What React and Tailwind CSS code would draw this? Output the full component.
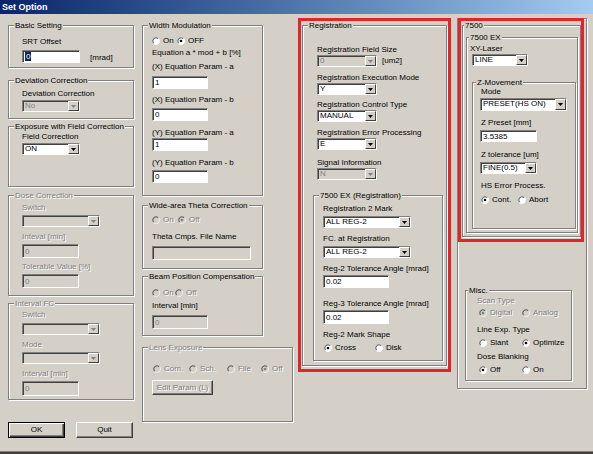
import React from 'react';

const dis = 'text-[#808080] [text-shadow:1px_1px_0_#fff]';
const sunken = 'border border-t-[#808080] border-l-[#808080] border-b-white border-r-white shadow-[inset_1px_1px_0_#404040]';

const Group = ({ title, disabled, legendClass = 'left-[5px]', className = '', children }) => (
    <div className={`relative border border-[#808080] shadow-[1px_1px_0_#fff,inset_1px_1px_0_#fff] ${className}`}>
        {title && (
            <span className={`absolute -top-[6px] bg-[#d4d0c8] px-[1px] leading-[11px] whitespace-nowrap ${legendClass} ${disabled ? dis : ''}`}>
                {title}
            </span>
        )}
        {children}
    </div>
);

const Label = ({ children, disabled, className = '' }) => (
    <div className={`h-[11px] leading-[11px] whitespace-nowrap ${disabled ? dis : ''} ${className}`}>{children}</div>
);

const Edit = ({ value, disabled, selected, className = '' }) => (
    <div className={`flex items-center pl-[2px] leading-[9px] ${sunken} ${disabled ? 'bg-[#d4d0c8] text-[#808080]' : 'bg-white'} ${className}`}>
        {selected ? <span className="bg-[#0a246a] text-white px-[1px]">{value}</span> : value}
    </div>
);

const Combo = ({ value, disabled, className = '' }) => (
    <div className={`flex h-[12px] ${sunken} ${disabled ? 'bg-[#d4d0c8]' : 'bg-white'} ${className}`}>
        <div className={`flex-1 pl-[2px] leading-[10px] whitespace-nowrap overflow-hidden ${disabled ? 'text-[#808080]' : ''}`}>{value}</div>
        <div className="w-[11px] flex items-center justify-center bg-[#d4d0c8] border border-t-white border-l-white border-b-[#404040] border-r-[#404040]">
            <svg width="5" height="3" viewBox="0 0 5 3">
                <path d="M0 0h5L2.5 3z" fill={disabled ? '#808080' : '#000'} />
            </svg>
        </div>
    </div>
);

const Radio = ({ label, checked, disabled, className = '' }) => (
    <span className={`inline-flex items-center gap-[3px] whitespace-nowrap ${className}`}>
        <svg width="8" height="8" viewBox="0 0 12 12" className="shrink-0">
            <circle cx="6" cy="6" r="5.5" fill={disabled ? '#d4d0c8' : '#fff'} />
            <path d="M2.1 9.9A5.5 5.5 0 0 1 9.9 2.1" stroke="#808080" fill="none" />
            <path d="M9.9 2.1A5.5 5.5 0 0 1 2.1 9.9" stroke="#fff" fill="none" />
            <path d="M2.8 9.2A4.5 4.5 0 0 1 9.2 2.8" stroke="#404040" fill="none" />
            {checked && <circle cx="6" cy="6" r="2" fill={disabled ? '#808080' : '#000'} />}
        </svg>
        <span className={disabled ? dis : ''}>{label}</span>
    </span>
);

const Btn = ({ children, isDefault, disabled, className = '' }) => (
    <div
        className={`flex items-center justify-center border ${
            isDefault
                ? 'border-black shadow-[inset_1px_1px_0_#fff,inset_-1px_-1px_0_#404040,inset_-2px_-2px_0_#808080]'
                : 'border-t-white border-l-white border-b-[#404040] border-r-[#404040] shadow-[inset_-1px_-1px_0_#808080]'
        } ${disabled ? dis : ''} ${className}`}
    >
        {children}
    </div>
);

const App = () => {
    return (
        <div className="relative w-[593px] h-[454px] overflow-hidden flex flex-col bg-[#d4d0c8] text-black text-[8px] font-['Liberation_Sans',Arial,sans-serif]">
            <div className="h-[14px] shrink-0 bg-gradient-to-r from-[#0a246a] to-[#a6caf0] text-white font-bold text-[9px] leading-[14px] pl-[2px]">
                Set Option
            </div>

            <div className="flex-1 flex items-start pl-[8px] pt-[11px]">
                {/* column 1 */}
                <div className="w-[126px] flex flex-col">
                    <Group title="Basic Setting" className="h-[43px] pl-[13px] pt-[10px]">
                        <Label>SRT Offset</Label>
                        <div className="mt-[2px] flex items-center">
                            <Edit value="0" selected className="w-[58px] h-[13px]" />
                            <span className="ml-[10px] mt-[3px]">[mrad]</span>
                        </div>
                    </Group>
                    <Group title="Deviation Correction" className="mt-[12px] h-[39px] pl-[13px] pt-[7px]">
                        <Label>Deviation Correction</Label>
                        <Combo value="No" disabled className="mt-[1px] w-[58px]" />
                    </Group>
                    <Group title="Exposure with Field Correction" className="mt-[7px] h-[61px] pl-[13px] pt-[4px]">
                        <Label>Field Correction</Label>
                        <Combo value="ON" className="mt-[1px] w-[58px]" />
                    </Group>
                    <Group title="Dose Correction" disabled className="mt-[8px] h-[101px] pl-[13px] pt-[6px]">
                        <Label disabled>Switch</Label>
                        <Combo value="" disabled className="mt-[2px] w-[78px]" />
                        <Label disabled className="mt-[4px]">Inteval [min]</Label>
                        <Edit value="0" disabled className="mt-[2px] w-[57px] h-[14px]" />
                        <Label disabled className="mt-[3px]">Tolerable Value [%]</Label>
                        <Edit value="0" disabled className="mt-[2px] w-[57px] h-[14px]" />
                    </Group>
                    <Group title="Interval FC" disabled className="mt-[7px] h-[97px] pl-[13px] pt-[5px]">
                        <Label disabled>Switch</Label>
                        <Combo value="" disabled className="mt-[3px] w-[78px]" />
                        <Label disabled className="mt-[4px]">Mode</Label>
                        <Combo value="" disabled className="mt-[2px] w-[78px]" />
                        <Label disabled className="mt-[4px]">Interval [min]</Label>
                        <Edit value="0" disabled className="mt-[2px] w-[57px] h-[15px]" />
                    </Group>
                    <div className="mt-[22px] flex">
                        <Btn isDefault className="w-[57px] h-[16px]">OK</Btn>
                        <Btn className="ml-[11px] w-[57px] h-[16px]">Quit</Btn>
                    </div>
                </div>

                {/* column 2 */}
                <div className="ml-[8px] w-[151px] flex flex-col">
                    <Group title="Width Modulation" className="w-[121px] h-[171px] pl-[9px] pt-[9px]">
                        <div className="flex h-[11px] items-center">
                            <Radio label="On" className="w-[25px]" />
                            <Radio label="OFF" checked />
                        </div>
                        <Label className="mt-[1px]">Equation a * mod + b [%]</Label>
                        <Label className="mt-[3px]">(X) Equation Param - a</Label>
                        <Edit value="1" className="mt-[4px] w-[56px] h-[13px]" />
                        <Label className="mt-[5px]">(X) Equation Param - b</Label>
                        <Edit value="0" className="mt-[3px] w-[56px] h-[13px]" />
                        <Label className="mt-[6px]">(Y) Equation Param - a</Label>
                        <Edit value="1" className="w-[56px] h-[13px]" />
                        <Label className="mt-[6px]">(Y) Equation Param - b</Label>
                        <Edit value="0" className="mt-[2px] w-[56px] h-[13px]" />
                    </Group>
                    <Group title="Wide-area Theta Correction" className="mt-[9px] w-[121px] h-[64px] pl-[9px] pt-[8px]">
                        <div className="flex h-[11px] items-center">
                            <Radio label="On" disabled className="w-[26px]" />
                            <Radio label="Off" checked disabled />
                        </div>
                        <Label className="mt-[6px]">Theta Cmps. File Name</Label>
                        <Edit value="" disabled className="mt-[4px] w-[99px] h-[14px]" />
                    </Group>
                    <Group title="Beam Position Compensation" className="mt-[7px] w-[121px] h-[60px] pl-[9px] pt-[10px]">
                        <div className="flex h-[11px] items-center">
                            <Radio label="On" disabled className="w-[23px]" />
                            <Radio label="Off" disabled />
                        </div>
                        <Label className="mt-[2px]">Interval [min]</Label>
                        <Edit value="0" disabled className="mt-[4px] w-[56px] h-[14px]" />
                    </Group>
                    <Group title="Lens Exposure" disabled className="mt-[11px] w-[151px] h-[75px] pl-[10px] pt-[15px]">
                        <div className="flex h-[11px] items-center">
                            <Radio label="Com." disabled className="w-[36px]" />
                            <Radio label="Sch." disabled className="w-[38px]" />
                            <Radio label="File" disabled className="w-[34px]" />
                            <Radio label="Off" checked disabled />
                        </div>
                        <Btn disabled className="mt-[6px] -ml-[1px] w-[61px] h-[15px]">Edit Param (L)</Btn>
                    </Group>
                </div>

                {/* column 3 */}
                <Group title="Registration" className="ml-[9px] w-[145px] h-[341px] pl-[14px] pt-[18px]">
                    <Label>Registration Field Size</Label>
                    <div className="flex items-center">
                        <Combo value="0" disabled className="w-[60px]" />
                        <span className="ml-[5px]">[um2]</span>
                    </div>
                    <Label className="mt-[5px]">Registration Execution Mode</Label>
                    <Combo value="Y" className="w-[60px]" />
                    <Label className="mt-[4px]">Registration Control Type</Label>
                    <Combo value="MANUAL" className="w-[60px]" />
                    <Label className="mt-[5px]">Registration Error Processing</Label>
                    <Combo value="E" className="w-[60px]" />
                    <Label className="mt-[7px]">Signal Information</Label>
                    <Combo value="N" disabled className="w-[60px]" />
                    <Group title="7500 EX (Registration)" className="mt-[15px] -ml-[4px] w-[130px] h-[166px] pl-[9px] pt-[7px]">
                        <Label>Registration 2 Mark</Label>
                        <Combo value="ALL REG-2" className="mt-[2px] w-[88px]" />
                        <Label className="mt-[5px]">FC. at Registration</Label>
                        <Combo value="ALL REG-2" className="mt-[2px] w-[88px]" />
                        <Label className="mt-[5px]">Reg-2 Tolerance Angle [mrad]</Label>
                        <Edit value="0.02" className="mt-[1px] w-[66px] h-[13px]" />
                        <Label className="mt-[10px]">Reg-3 Tolerance Angle [mrad]</Label>
                        <Edit value="0.02" className="mt-[1px] w-[66px] h-[14px]" />
                        <Label className="mt-[5px]">Reg-2 Mark Shape</Label>
                        <div className="mt-[2px] ml-[1px] flex h-[11px] items-center">
                            <Radio label="Cross" checked className="w-[51px]" />
                            <Radio label="Disk" />
                        </div>
                    </Group>
                    {/* annotation frame */}
                    <div className="absolute -left-[5px] -top-[8px] w-[153px] h-[354px] border-[3px] border-[#e3242b] pointer-events-none" />
                </Group>

                {/* column 4 */}
                <Group className="ml-[10px] -mt-[7px] w-[130px] h-[371px] pl-[4px] pt-[6px]">
                    <Group title="7500" legendClass="left-[1px]" className="w-[119px] h-[212px] pl-[3px] pt-[11px]">
                        <Group title="7500 EX" legendClass="left-[2px]" className="w-[112px] h-[196px] pl-[3px] pt-[5px]">
                            <Label>XY-Laser</Label>
                            <Combo value="LINE" className="ml-[2px] w-[56px]" />
                            <Group title="Z-Movement" legendClass="left-[3px]" className="mt-[16px] ml-[2px] w-[104px] h-[147px] pl-[8px] pt-[3px]">
                                <Label>Mode</Label>
                                <Combo value="PRESET(HS ON)" className="mt-[1px] -ml-[1px] w-[87px] h-[13px]" />
                                <Label className="mt-[6px]">Z Preset [mm]</Label>
                                <Edit value="3.5385" className="mt-[2px] -ml-[1px] w-[57px] h-[12px]" />
                                <Label className="mt-[7px]">Z tolerance [um]</Label>
                                <Combo value="FINE(0.5)" className="mt-[2px] -ml-[1px] w-[57px]" />
                                <Label className="mt-[6px]">HS Error Process.</Label>
                                <div className="mt-[3px] flex h-[11px] items-center">
                                    <Radio label="Cont." checked className="w-[37px]" />
                                    <Radio label="Abort" />
                                </div>
                            </Group>
                        </Group>
                    </Group>
                    <Group title="Misc." legendClass="left-[2px]" className="mt-[53px] ml-[3px] w-[107px] h-[91px] pl-[11px] pt-[4px]">
                        <Label disabled>Scan Type</Label>
                        <div className="mt-[1px] ml-[2px] flex h-[11px] items-center">
                            <Radio label="Digital" checked disabled className="w-[43px]" />
                            <Radio label="Analog" disabled />
                        </div>
                        <Label className="mt-[6px]">Line Exp. Type</Label>
                        <div className="mt-[2px] ml-[2px] flex h-[11px] items-center">
                            <Radio label="Slant" className="w-[43px]" />
                            <Radio label="Optimize" checked />
                        </div>
                        <Label className="mt-[3px]">Dose Blanking</Label>
                        <div className="mt-[2px] ml-[2px] flex h-[11px] items-center">
                            <Radio label="Off" checked className="w-[43px]" />
                            <Radio label="On" />
                        </div>
                    </Group>
                    {/* annotation frame */}
                    <div className="absolute left-0 -top-[1px] w-[126px] h-[224px] border-[3px] border-[#e3242b] pointer-events-none" />
                </Group>
            </div>

            <div className="h-[3px] shrink-0 border-t border-[#808080] bg-[#404040]" />
        </div>
    );
};

export default App;
